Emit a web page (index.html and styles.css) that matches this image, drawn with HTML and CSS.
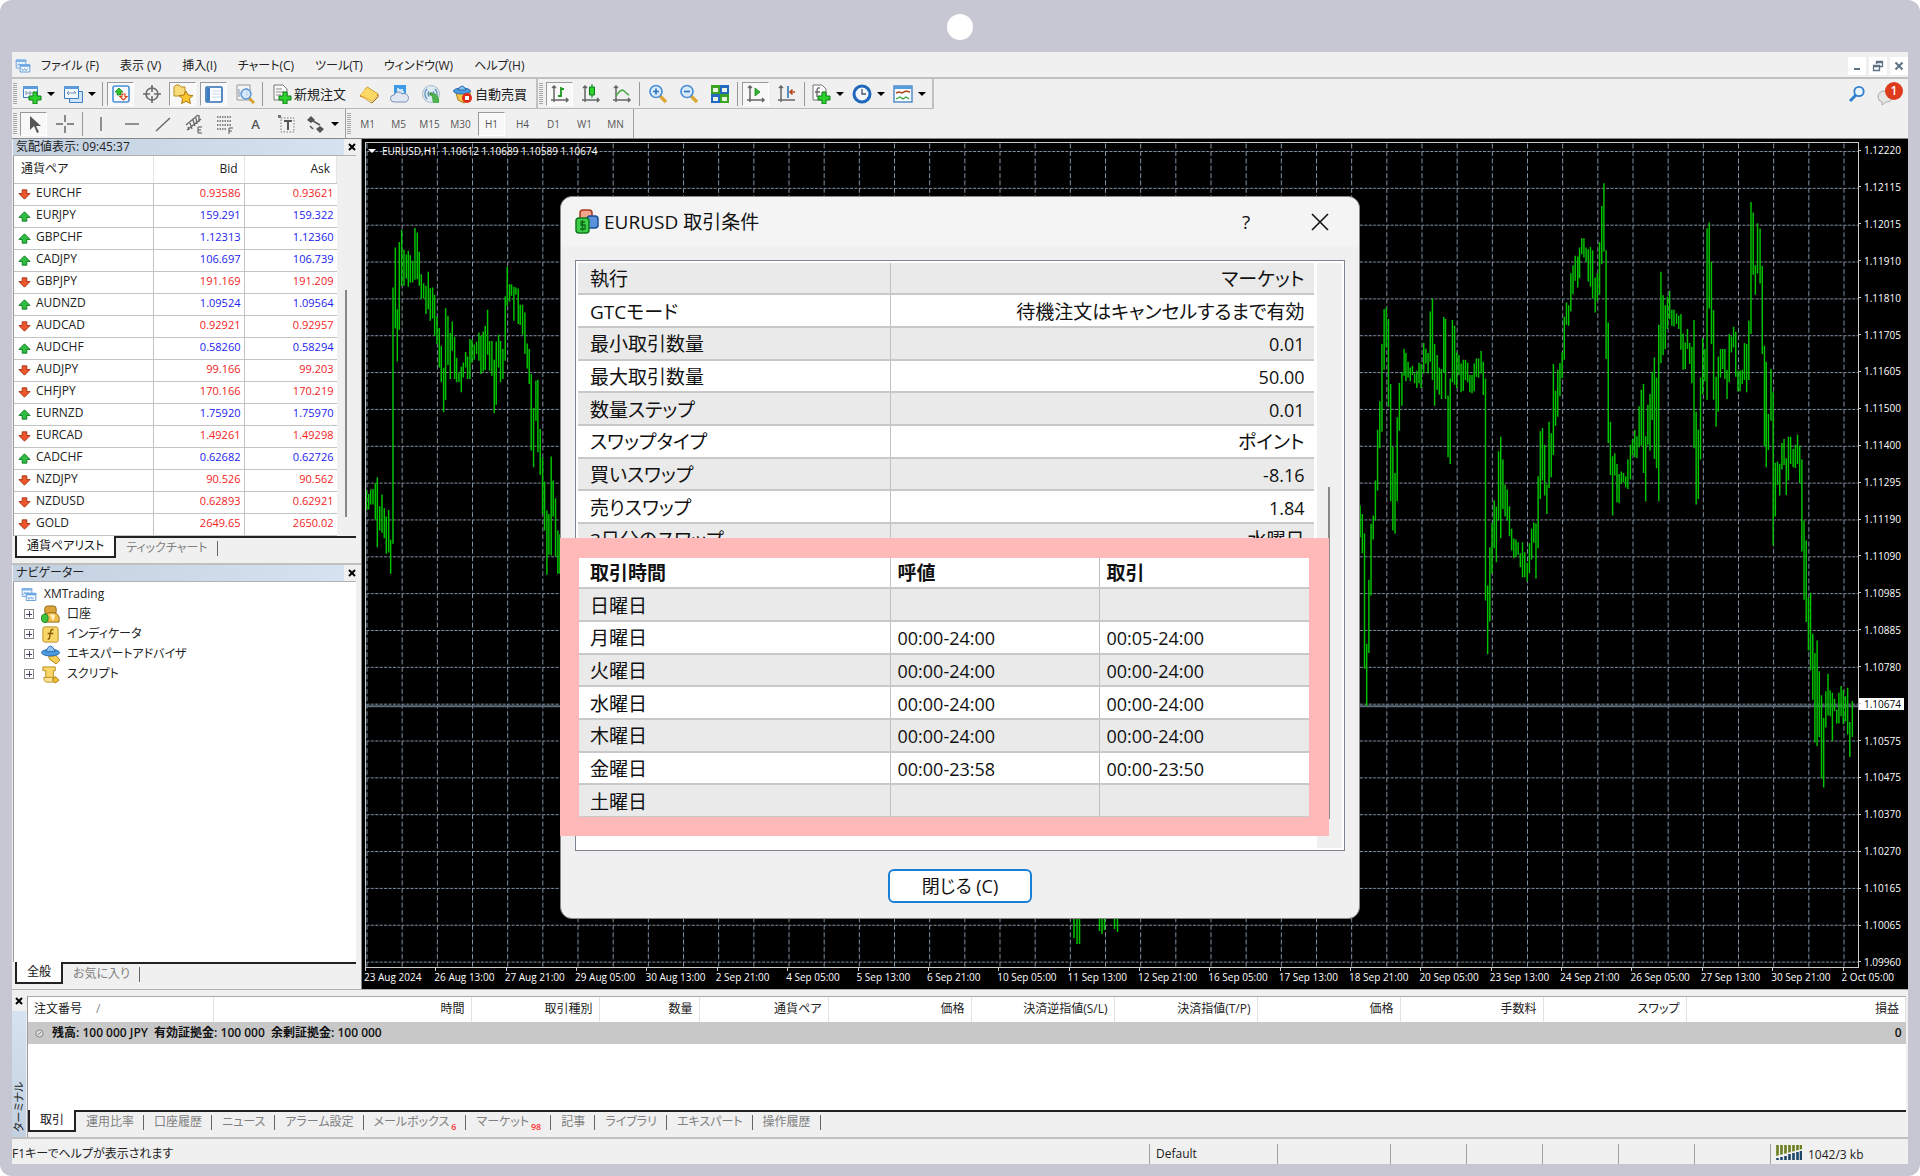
FILE: index.html
```html
<!DOCTYPE html>
<html lang="ja">
<head>
<meta charset="utf-8">
<title>XMTrading - EURUSD,H1</title>
<link rel="stylesheet" href="styles.css">
</head>
<body>
<svg class="defs" aria-hidden="true">
  <symbol id="i-app" viewBox="0 0 20 20"><path d="M1.500 2.500h12v10h-12z" fill="#eef6fd" stroke="#5b95d6"/><path d="M1 2h13v3H1z" fill="#7db4e8"/><path d="M3 10l2-3 2 3 2-3" fill="none" stroke="#5b95d6"/><path d="M6.500 8.500h12v9h-12z" fill="#f6fbff" stroke="#4c8bd0"/><path d="M6 8h13v3H6z" fill="#6aa6e4"/><path d="M8 13l2 3 2-3 2 3 2-3" fill="none" stroke="#5b95d6"/></symbol>
  <symbol id="i-newchart" viewBox="0 0 20 20"><path d="M1.500 2.500h14v11h-14z" fill="#f2f8fe" stroke="#3c7fc4"/><path d="M1 2h15v3H1z" fill="#5a9bdc"/><path d="M4 7v4M4 9h6M8 7v4" stroke="#7a93ad" fill="none"/><path d="M11 8h4v4h4v4h-4v4h-4v-4H7v-4h4z" fill="#2fd12f" stroke="#0b7d14"/></symbol>
  <symbol id="i-profiles" viewBox="0 0 20 20"><path d="M6.500 7.500h13v11h-13z" fill="#cfe4f8" stroke="#3c7fc4"/><path d="M1.500 2.500h14v12h-14z" fill="#f2f8fe" stroke="#3c7fc4"/><path d="M1 2h15v3H1z" fill="#5a9bdc"/><path d="M4 9h9M4 9l2-2M4 9l2 2M13 9l-2-2" stroke="#7a93ad" fill="none"/></symbol>
  <symbol id="i-market" viewBox="0 0 20 20"><rect x="2" y="2" width="16" height="16" rx="2" fill="#f7fbff" stroke="#4a90d9" stroke-width="1.600"/><path d="M8 4l4 4h-2v3H6V8H4z" fill="#2fc32f" stroke="#0b7d14" stroke-width=".7"/><path d="M12.500 16l-3.500-3.500h2V10h3v2.500h2z" fill="#fff" stroke="#e0461c" stroke-width="1.200"/></symbol>
  <symbol id="i-target" viewBox="0 0 20 20"><circle cx="10" cy="10" r="6" fill="none" stroke="#6b6b6b" stroke-width="1.600"/><path d="M10 1v7M10 12v7M1 10h7M12 10h7" stroke="#6b6b6b" stroke-width="1.600"/></symbol>
  <symbol id="i-nav" viewBox="0 0 20 20"><path d="M1 12V3l2-2h3l2 2h4v9z" fill="#f8dc78" stroke="#b98d1c"/><path d="M13 7l2 4 5 .6-3.600 3.200 1 4.700L13 17.300 8.600 19.500l1-4.700L6 11.600l5-.6z" fill="#fbc62d" stroke="#b07a10"/></symbol>
  <symbol id="i-terminal" viewBox="0 0 20 20"><rect x="2" y="3" width="16" height="15" rx="1" fill="#fbfdff" stroke="#2e6db4" stroke-width="1.600"/><path d="M3 4h3v13H3z" fill="#3f7cc2"/><path d="M8 7h9M8 10h9M8 13h9" stroke="#c9ddf2"/></symbol>
  <symbol id="i-tester" viewBox="0 0 20 20"><path d="M2 1h13v15H2z" fill="#f4f4f4" stroke="#999"/><path d="M4 13V5M7 13V8M12 12V4" stroke="#7a93ad"/><path d="M14 14l5 5" stroke="#d8a030" stroke-width="3"/><circle cx="11" cy="10" r="5" fill="#cfe6fb" fill-opacity=".8" stroke="#5b95d6" stroke-width="1.400"/></symbol>
  <symbol id="i-order" viewBox="0 0 20 20"><path d="M2 1h9l4 4v11H2z" fill="#fafafa" stroke="#777"/><path d="M4 5h6M4 8h8M4 11h5" stroke="#888"/><path d="M11 8h4v4h4v4h-4v4h-4v-4H7v-4h4z" fill="#2fd12f" stroke="#0b7d14"/></symbol>
  <symbol id="i-book" viewBox="0 0 20 20"><path d="M1 12L8 3l11 7v3l-6 6z" fill="#dfa12a" stroke="#9c6a10"/><path d="M1 11l7-8 11 7-6 7z" fill="#fbd765"/><path d="M1.500 13l11 5 6-6" fill="none" stroke="#fff3c8"/></symbol>
  <symbol id="i-cloud" viewBox="0 0 20 20"><path d="M4 1h12v12H4z" fill="#3b9be8"/><path d="M8 4v4h6M8 6h5" stroke="#fff" fill="none" stroke-width="1.300"/><path d="M4 18a3.500 3.500 0 010-7 4.500 4.500 0 018-1 4 4 0 014 8z" fill="#dfe7f2" stroke="#7d93b3"/></symbol>
  <symbol id="i-signal" viewBox="0 0 20 20"><circle cx="10" cy="10" r="8.500" fill="#dfeaf3" stroke="#a9bccb"/><path d="M6 15a7 7 0 010-10M14 5a7 7 0 010 10M8 12.500a4 4 0 010-5M12 7.500a4 4 0 010 5" fill="none" stroke="#5b8fb8" stroke-width="1.300"/><path d="M10 9l2 10h6a9 9 0 00-3-9z" fill="#4fb04f"/><circle cx="10" cy="10" r="1.800" fill="#3b9a3b"/></symbol>
  <symbol id="i-auto" viewBox="0 0 20 20"><path d="M3 9l2 7 6 3 6-4V8z" fill="#f3c548" stroke="#a8801c"/><ellipse cx="9" cy="7" rx="8.500" ry="3" fill="#4c9be0" stroke="#2b6cae"/><path d="M5 6q4-8 8 0z" fill="#8cc4f3" stroke="#2b6cae"/><circle cx="14" cy="14" r="5" fill="#e02b18"/><path d="M12 12h4v4h-4z" fill="#fff"/></symbol>
  <symbol id="i-bars" viewBox="0 0 20 20"><path d="M4 2v16M1 16h17M2 4l2-2 2 2M16 14l2 2-2 2" fill="none" stroke="#666" stroke-width="1.500"/><path d="M11 3v10M11 5h3M8 12h3" stroke="#1b9a1b" stroke-width="1.800"/></symbol>
  <symbol id="i-candle" viewBox="0 0 20 20"><path d="M4 2v16M1 16h17M2 4l2-2 2 2M16 14l2 2-2 2" fill="none" stroke="#666" stroke-width="1.500"/><path d="M11 0v14" stroke="#0b7d14"/><path d="M8.500 3h5v8h-5z" fill="#2fd12f" stroke="#0b7d14"/></symbol>
  <symbol id="i-line" viewBox="0 0 20 20"><path d="M4 2v16M1 16h17M2 4l2-2 2 2M16 14l2 2-2 2" fill="none" stroke="#666" stroke-width="1.500"/><path d="M4 12q5-8 8-5t5 4" fill="none" stroke="#4cab4c" stroke-width="1.600"/></symbol>
  <symbol id="i-zin" viewBox="0 0 20 20"><path d="M12 12l6 6" stroke="#dca632" stroke-width="3.400"/><circle cx="8" cy="7.500" r="6" fill="#d8ebfb" stroke="#4a8fd3" stroke-width="1.700"/><path d="M5 7.500h6M8 4.500v6" stroke="#2f75bb" stroke-width="1.700"/></symbol>
  <symbol id="i-zout" viewBox="0 0 20 20"><path d="M12 12l6 6" stroke="#dca632" stroke-width="3.400"/><circle cx="8" cy="7.500" r="6" fill="#d8ebfb" stroke="#4a8fd3" stroke-width="1.700"/><path d="M5 7.500h6" stroke="#2f75bb" stroke-width="1.700"/></symbol>
  <symbol id="i-tile" viewBox="0 0 20 20"><path d="M1 1h9v9H1zM10 10h9v9h-9z" fill="#3aa321"/><path d="M10 1h9v9h-9zM1 10h9v9H1z" fill="#2469c0"/><path d="M3 4h5v4H3zM12 4h5v4h-5zM3 13h5v4H3zM12 13h5v4h-5z" fill="#e9f3e6"/></symbol>
  <symbol id="i-scroll" viewBox="0 0 20 20"><path d="M4 2v16M1 16h17M2 4l2-2 2 2M16 14l2 2-2 2" fill="none" stroke="#666" stroke-width="1.500"/><path d="M9 4l5 4-5 4z" fill="#2fb52f" stroke="#0b7d14" stroke-width=".7"/></symbol>
  <symbol id="i-shift" viewBox="0 0 20 20"><path d="M4 2v16M1 16h17M2 4l2-2 2 2" fill="none" stroke="#666" stroke-width="1.500"/><path d="M11 2v12" stroke="#2f75bb" stroke-width="1.600"/><path d="M18 8h-5M15.500 5.500L13 8l2.500 2.500" fill="none" stroke="#b5451b" stroke-width="1.600"/></symbol>
  <symbol id="i-indic" viewBox="0 0 20 20"><path d="M2 1h9l4 4v11H2z" fill="#fafafa" stroke="#777"/><path d="M9 4q-3-1-3 3v6M4 8h5" fill="none" stroke="#666" stroke-width="1.300"/><path d="M11 8h4v4h4v4h-4v4h-4v-4H7v-4h4z" fill="#2fd12f" stroke="#0b7d14"/></symbol>
  <symbol id="i-clock" viewBox="0 0 20 20"><circle cx="10" cy="10" r="8" fill="#f3f7fc" stroke="#1f66bd" stroke-width="3"/><path d="M10 5v5h4" fill="none" stroke="#456" stroke-width="1.300"/></symbol>
  <symbol id="i-templ" viewBox="0 0 20 20"><rect x="1" y="2" width="18" height="16" fill="#f8fbff" stroke="#3c7fc4" stroke-width="1.300"/><path d="M1 2h18v3H1z" fill="#5a9bdc"/><path d="M3 9l3-1 3 1 4-2 4 1" fill="none" stroke="#b5451b" stroke-width="1.400"/><path d="M3 15l4-2 3 2 3-2 3 2" fill="none" stroke="#3aa33a" stroke-width="1.300"/></symbol>
  <symbol id="i-cursor" viewBox="0 0 20 20"><path d="M6 2v14l4-4 3 7 2-1-3-6h5z" fill="#555"/></symbol>
  <symbol id="i-cross" viewBox="0 0 20 20"><path d="M10 1v7M10 12v7M1 10h7M12 10h7" stroke="#666" stroke-width="1.500"/></symbol>
  <symbol id="i-v" viewBox="0 0 20 20"><path d="M10 3v14" stroke="#666" stroke-width="1.400"/></symbol>
  <symbol id="i-h" viewBox="0 0 20 20"><path d="M3 10h14" stroke="#666" stroke-width="1.400"/></symbol>
  <symbol id="i-trend" viewBox="0 0 20 20"><path d="M3 17L17 4" stroke="#666" stroke-width="1.400"/></symbol>
  <symbol id="i-chan" viewBox="0 0 20 20"><path d="M2 11L14 1M3 16L17 5M4 13l1 3M6 9l2 6M9 6l2 6M12 4l1 6M15 1v7" fill="none" stroke="#666" stroke-width="1.300"/><path d="M18 13h-4v6h4M14 16h3" fill="none" stroke="#555"/></symbol>
  <symbol id="i-fib" viewBox="0 0 20 20"><path d="M2 3h15M2 7h15M2 11h15M2 15h10" stroke="#666" stroke-dasharray="1.500 1" stroke-width="1.300"/><path d="M18 14h-4v6M14 17h3" fill="none" stroke="#555"/></symbol>
  <symbol id="i-label" viewBox="0 0 20 20"><path d="M4 4h13v14H4z" fill="none" stroke="#777" stroke-dasharray="1.500 1.500"/><path d="M7 7h8M11 7v9" stroke="#555" stroke-width="2" fill="none"/><path d="M1 1h3v3H1z" fill="#777"/></symbol>
  <symbol id="i-shapes" viewBox="0 0 20 20"><path d="M5 2l4 4-4 3-4-3zM14 12l4 3-4 4-4-4z" fill="#555"/><path d="M4 12l3 3M7 7l7 4" stroke="#555" stroke-width="1.500" fill="none"/></symbol>
  <symbol id="i-up" viewBox="0 0 14 14"><path d="M7 2l6 6H9.500v4h-5V8H1z" fill="#2fbe42" stroke="#0f7a22"/></symbol>
  <symbol id="i-down" viewBox="0 0 14 14"><path d="M7 12L1 6h3.500V2h5v4H13z" fill="#f0562c" stroke="#a23212"/></symbol>
  <symbol id="i-acct" viewBox="0 0 20 20"><rect x="4" y="1" width="12" height="9" rx="3" fill="#d9a43a" stroke="#8f6512"/><path d="M4 18V13q0-5 7-5t8 5v5z" fill="#f0bf4a" stroke="#8f6512"/><path d="M9 10l4 7 2-7" fill="#fff2c4"/><ellipse cx="4" cy="14" rx="3.500" ry="4.500" fill="#3fc43f" stroke="#1c7d1c"/></symbol>
  <symbol id="i-fx" viewBox="0 0 20 20"><rect x="2" y="2" width="16" height="16" rx="2" fill="#f9d768" stroke="#b98d1c"/><path d="M13 5q-3-1-3 3l-1 5q0 2-2 2M7 9h6" fill="none" stroke="#8a5c08" stroke-width="1.500"/></symbol>
  <symbol id="i-expert" viewBox="0 0 20 20"><path d="M8 12l8-1 4 5-4 4-7-5z" fill="#f7cd52" stroke="#a8801c"/><ellipse cx="10" cy="8" rx="9.500" ry="3.500" fill="#4c9be0" stroke="#2b6cae"/><path d="M5 7q5-12 10 0z" fill="#8cc4f3" stroke="#2b6cae"/></symbol>
  <symbol id="i-script" viewBox="0 0 20 20"><path d="M2 2h13v4h-2v8H5V6H2z" fill="#f9d768" stroke="#b98d1c"/><path d="M3 13h9l2 5H6q-3 0-3-5z" fill="#fbe393" stroke="#b98d1c"/><path d="M15 12l4 4-4 3-3-3z" fill="#f3bb2e" stroke="#a8801c"/></symbol>
</svg>

<div class="frame">
  <header class="bezel"><span class="camera"></span></header>

  <main class="app">
    <nav class="menubar">
      <svg class="ico"><use href="#i-app"/></svg>
      <button>ファイル (F)</button><button>表示 (V)</button><button>挿入(I)</button><button>チャート(C)</button><button>ツール(T)</button><button>ウィンドウ(W)</button><button>ヘルプ(H)</button>
      <div class="winbtns">
        <button aria-label="最小化"><svg viewBox="0 0 16 16"><path d="M5 11h6" stroke="#5d7385" stroke-width="2"/></svg></button>
        <button aria-label="元に戻す"><svg viewBox="0 0 16 16"><path d="M6.500 6V3.500h6v5H10M6.500 4.500h6M3.500 7.500h6v5h-6zM3.500 8.500h6" fill="none" stroke="#5d7385" stroke-width="1.300"/></svg></button>
        <button aria-label="閉じる"><svg viewBox="0 0 16 16"><path d="M4.500 4.500l7 7M11.500 4.500l-7 7" stroke="#5d7385" stroke-width="2"/></svg></button>
      </div>
    </nav>

    <div class="toolbar toolbar-main">
      <div class="tools">
        <i class="grip"></i>
        <button class="tool drop"><svg class="ico"><use href="#i-newchart"/></svg></button>
        <button class="tool drop"><svg class="ico"><use href="#i-profiles"/></svg></button>
        <i class="sep"></i>
        <button class="tool on"><svg class="ico"><use href="#i-market"/></svg></button>
        <button class="tool"><svg class="ico"><use href="#i-target"/></svg></button>
        <button class="tool on"><svg class="ico"><use href="#i-nav"/></svg></button>
        <button class="tool on"><svg class="ico"><use href="#i-terminal"/></svg></button>
        <button class="tool"><svg class="ico"><use href="#i-tester"/></svg></button>
        <i class="sep"></i>
        <button class="tool wide"><svg class="ico"><use href="#i-order"/></svg>新規注文</button>
        <button class="tool"><svg class="ico"><use href="#i-book"/></svg></button>
        <button class="tool"><svg class="ico"><use href="#i-cloud"/></svg></button>
        <button class="tool"><svg class="ico"><use href="#i-signal"/></svg></button>
        <button class="tool wide"><svg class="ico"><use href="#i-auto"/></svg>自動売買</button>
      </div>
      <div class="tools">
        <i class="grip"></i>
        <button class="tool on"><svg class="ico"><use href="#i-bars"/></svg></button>
        <button class="tool"><svg class="ico"><use href="#i-candle"/></svg></button>
        <button class="tool"><svg class="ico"><use href="#i-line"/></svg></button>
        <i class="sep"></i>
        <button class="tool"><svg class="ico"><use href="#i-zin"/></svg></button>
        <button class="tool"><svg class="ico"><use href="#i-zout"/></svg></button>
        <button class="tool"><svg class="ico"><use href="#i-tile"/></svg></button>
        <i class="sep"></i>
        <button class="tool on"><svg class="ico"><use href="#i-scroll"/></svg></button>
        <button class="tool"><svg class="ico"><use href="#i-shift"/></svg></button>
        <i class="sep"></i>
        <button class="tool drop"><svg class="ico"><use href="#i-indic"/></svg></button>
        <button class="tool drop"><svg class="ico"><use href="#i-clock"/></svg></button>
        <button class="tool drop"><svg class="ico"><use href="#i-templ"/></svg></button>
      </div>
      <div class="corner">
        <button aria-label="検索"><svg width="18" height="18" viewBox="0 0 18 18"><path d="M8 10l-6 6" stroke="#2f7fd0" stroke-width="3"/><circle cx="11" cy="6.500" r="4.700" fill="#eaf4fd" stroke="#2f7fd0" stroke-width="1.800"/></svg></button>
        <button class="notify" aria-label="通知"><svg width="28" height="24" viewBox="0 0 28 24"><path d="M3 15q0-6 7-6t8 6q-1 5-7 5l-4 3v-3q-4-1-4-5z" fill="#e6e6e6" stroke="#aaa"/></svg><b>1</b></button>
      </div>
    </div>

    <div class="toolbar toolbar-sub">
      <div class="tools">
        <i class="grip"></i>
        <button class="tool on"><svg class="ico"><use href="#i-cursor"/></svg></button>
        <button class="tool"><svg class="ico"><use href="#i-cross"/></svg></button>
        <i class="sep"></i>
        <button class="tool"><svg class="ico"><use href="#i-v"/></svg></button>
        <button class="tool"><svg class="ico"><use href="#i-h"/></svg></button>
        <button class="tool"><svg class="ico"><use href="#i-trend"/></svg></button>
        <button class="tool"><svg class="ico"><use href="#i-chan"/></svg></button>
        <button class="tool"><svg class="ico"><use href="#i-fib"/></svg></button>
        <button class="tool letter">A</button>
        <button class="tool"><svg class="ico"><use href="#i-label"/></svg></button>
        <button class="tool drop"><svg class="ico"><use href="#i-shapes"/></svg></button>
      </div>
      <div class="tools periods">
        <i class="grip"></i>
        <button class="tool">M1</button><button class="tool">M5</button><button class="tool">M15</button><button class="tool">M30</button><button class="tool on">H1</button><button class="tool">H4</button><button class="tool">D1</button><button class="tool">W1</button><button class="tool">MN</button>
      </div>
    </div>

    <div class="workspace">
      <aside class="side">
        <section class="panel watch">
          <header class="title"><h2>気配値表示: 09:45:37</h2><button aria-label="閉じる"><svg viewBox="0 0 8 8"><path d="M1 1l6 6M7 1L1 7"/></svg></button></header>
          <div class="scroller">
            <table class="quotes">
              <thead><tr><th>通貨ペア</th><th>Bid</th><th>Ask</th></tr></thead>
              <tbody>
                <tr class="down"><td><svg><use href="#i-down"/></svg>EURCHF</td><td>0.93586</td><td>0.93621</td></tr>
                <tr class="up"><td><svg><use href="#i-up"/></svg>EURJPY</td><td>159.291</td><td>159.322</td></tr>
                <tr class="up"><td><svg><use href="#i-up"/></svg>GBPCHF</td><td>1.12313</td><td>1.12360</td></tr>
                <tr class="up"><td><svg><use href="#i-up"/></svg>CADJPY</td><td>106.697</td><td>106.739</td></tr>
                <tr class="down"><td><svg><use href="#i-down"/></svg>GBPJPY</td><td>191.169</td><td>191.209</td></tr>
                <tr class="up"><td><svg><use href="#i-up"/></svg>AUDNZD</td><td>1.09524</td><td>1.09564</td></tr>
                <tr class="down"><td><svg><use href="#i-down"/></svg>AUDCAD</td><td>0.92921</td><td>0.92957</td></tr>
                <tr class="up"><td><svg><use href="#i-up"/></svg>AUDCHF</td><td>0.58260</td><td>0.58294</td></tr>
                <tr class="down"><td><svg><use href="#i-down"/></svg>AUDJPY</td><td>99.166</td><td>99.203</td></tr>
                <tr class="down"><td><svg><use href="#i-down"/></svg>CHFJPY</td><td>170.166</td><td>170.219</td></tr>
                <tr class="up"><td><svg><use href="#i-up"/></svg>EURNZD</td><td>1.75920</td><td>1.75970</td></tr>
                <tr class="down"><td><svg><use href="#i-down"/></svg>EURCAD</td><td>1.49261</td><td>1.49298</td></tr>
                <tr class="up"><td><svg><use href="#i-up"/></svg>CADCHF</td><td>0.62682</td><td>0.62726</td></tr>
                <tr class="down"><td><svg><use href="#i-down"/></svg>NZDJPY</td><td>90.526</td><td>90.562</td></tr>
                <tr class="down"><td><svg><use href="#i-down"/></svg>NZDUSD</td><td>0.62893</td><td>0.62921</td></tr>
                <tr class="down"><td><svg><use href="#i-down"/></svg>GOLD</td><td>2649.65</td><td>2650.02</td></tr>
              </tbody>
            </table>
            <div class="track"><i class="thumb"></i></div>
          </div>
          <div class="tabs"><button class="active">通貨ペアリスト</button><button>ティックチャート</button></div>
        </section>
        <section class="panel navigator">
          <header class="title"><h2>ナビゲーター</h2><button aria-label="閉じる"><svg viewBox="0 0 8 8"><path d="M1 1l6 6M7 1L1 7"/></svg></button></header>
          <div class="tree">
            <p><svg class="ico"><use href="#i-app"/></svg>XMTrading</p>
            <ul>
              <li><i class="plus"></i><svg class="ico"><use href="#i-acct"/></svg>口座</li>
              <li><i class="plus"></i><svg class="ico"><use href="#i-fx"/></svg>インディケータ</li>
              <li><i class="plus"></i><svg class="ico"><use href="#i-expert"/></svg>エキスパートアドバイザ</li>
              <li><i class="plus"></i><svg class="ico"><use href="#i-script"/></svg>スクリプト</li>
            </ul>
          </div>
          <div class="tabs"><button class="active">全般</button><button>お気に入り</button></div>
        </section>
      </aside>

      <section class="chart">
        <div class="plot">
          <svg viewBox="365 142 1493 825" preserveAspectRatio="none">
            <defs>
              <pattern id="grid" x="365.500" y="150" width="35.190" height="36.890" patternUnits="userSpaceOnUse">
                <path d="M0 .5H35.190" stroke="#8495a8" stroke-dasharray="3 1.400"/>
                <path d="M.5 0V36.890" stroke="#8495a8" stroke-dasharray="5 2.380"/>
              </pattern>
            </defs>
            <rect x="365" y="142" width="1493" height="825" fill="url(#grid)"/>
            <path d="M365 706H1858" stroke="#5b6b7b" stroke-width="2"/>
            <g fill="none" stroke="#00c400">
              <path transform="translate(350 130) scale(.33333)" stroke-width="4.400" d="M46 1077V1140M53 1090V1137M59 1077V1122M66 1075V1122M73 1058V1168M79 1040V1250M86 1127V1200M93 1092V1207M100 1133V1223M106 1158V1270M113 1138V1266M119 1228V1330M126 470V1240M133 350V593M139 535V692M145 333V597M152 297V465M159 357V465M166 371V443M172 360V468M178 373V455M185 390V455M192 291V447M199 305V445M205 363V465M211 430V503M218 457V503M225 465V550M232 423V535M238 472V570M245 470V563M251 492V615M258 557V640M265 592V710M271 645V755M278 711V845M284 532V808M291 555V703M298 607V745M304 572V660M311 618V745M317 681V755M324 725V755M331 708V785M337 695V740M344 664V710M350 677V745M357 625V745M363 628V695M370 641V687M377 633V670M384 605V690M390 615V730M397 602V722M403 585V718M410 537V672M416 631V720M423 631V735M430 687V848M436 632V822M443 612V710M449 631V755M456 655V745M463 497V690M469 408V525M476 460V512M482 460V495M489 468V570M495 470V492M502 473V580M508 522V583M515 522V612M522 545V670M529 638V713M535 655V760M541 730V960M548 832V1010M555 750V870M561 747V965M568 895V1033M575 980V1150M581 1053V1200M588 1140V1333M594 1150V1273M601 978V1275M607 1050V1158M614 1103V1278M621 1200V1330M627 1212V1330"/>
              <path transform="translate(1350 40) scale(.36350 .33333)" stroke-width="4" d="M27 1395V1490M33 1420V1538M39 1478V1885M45 1810V1997M51 1618V1838M57 1450V1665M63 1425V1497M69 1320V1440M75 1167V1350M81 1082V1223M87 910V1173M93 805V987M99 800V920M105 835V1098M111 1030V1382M117 1218V1470M123 1297V1480M129 1130V1382M135 1027V1170M142 995V1095M148 924V1005M153 937V1022M159 963V1010M165 980V1022M171 975V1003M177 998V1028M183 990V1042M189 966V1028M195 970V1042M202 907V998M208 924V968M214 937V998M220 812V963M226 773V1018M232 910V1095M239 943V1047M245 980V1062M251 985V1075M257 828V995M262 835V1075M269 1065V1250M275 1013V1270M281 838V1025M287 855V1032M293 935V1042M299 943V1003M305 968V1055M311 957V1050M317 957V1018M323 966V1025M329 1003V1055M335 1003V1058M341 968V1052M347 953V1008M353 953V1010M360 931V998M366 963V1063M372 1013V1680M378 1635V1842M384 1520V1743M390 1448V1598M396 1380V1523M402 1398V1565M408 1232V1440M414 1188V1493M420 1257V1405M426 1332V1428M432 1347V1440M438 1397V1487M444 1465V1530M450 1494V1553M456 1497V1550M462 1505V1543M468 1538V1580M474 1505V1610M480 1535V1610M487 1567V1622M493 1508V1598M499 1465V1557M505 1446V1507M511 1449V1614M517 1307V1523M523 1172V1375M529 1162V1320M535 1212V1365M541 1332V1420M547 1143V1342M553 1178V1310M559 970V1243M565 1050V1155M571 987V1128M577 967V1067M583 935V1012M589 828V957M595 785V852M601 793V855M607 697V812M613 673V760M619 645V720M626 647V740M631 620V712M637 592V640M643 592V650M649 620V663M655 625V722M661 618V737M667 628V773M674 710V815M680 697V780M686 603V762M692 495V670M698 427V632M704 628V955M710 845V1207M716 1143V1303M722 1247V1425M728 1238V1305M734 1270V1385M740 1300V1388M746 1293V1330M752 1297V1325M758 1307V1340M764 1257V1345M771 1212V1317M777 1195V1243M783 1168V1250M789 1187V1252M795 1097V1220M801 1047V1215M807 1030V1297M813 1187V1382M819 1092V1212M825 1060V1230M831 993V1138M837 950V1255M843 1010V1283M849 852V1382M855 693V967M861 763V943M867 793V925M873 768V865M879 750V835M885 807V855M891 807V857M898 818V850M904 825V865M910 820V927M916 878V987M922 905V985M928 865V925M934 907V970M940 918V1028M946 838V1223M952 1113V1392M958 1167V1375M964 1010V1257M970 892V1060M976 925V1022M982 562V1077M988 545V803M994 663V910M1000 808V1077M1007 1008V1158M1013 947V1113M1019 925V1010M1025 925V985M1031 925V1015M1037 988V1075M1043 880V1025M1049 887V935M1055 858V920M1061 873V1008M1067 990V1052M1073 990V1052M1079 987V1030M1085 907V1018M1091 910V1055M1097 840V1018M1103 483V880M1109 515V702M1115 673V762M1121 547V698M1128 563V728M1134 675V940M1140 915V1217M1145 963V1280M1151 1120V1228M1158 985V1140M1164 1053V1515M1170 1267V1428M1176 1263V1333M1182 1270V1365M1188 1207V1287M1194 1195V1273M1200 1253V1363M1206 1188V1320M1212 1188V1270M1219 1225V1280M1225 1212V1282M1231 1182V1270M1237 1215V1327M1243 1257V1533M1249 1440V1678M1255 1500V1745M1261 1672V1830M1267 1657V1890M1273 1780V1978M1279 1838V2107M1285 1800V2117M1291 1893V2090M1297 1965V2215M1303 2033V2242M1309 1953V2062M1315 1900V2025M1321 1950V2028M1327 1957V2102M1333 1975V2012M1339 2008V2050M1345 1957V2050M1351 1937V2028M1357 1948V2052M1363 1968V2043M1369 1942V2083M1375 2045V2150M1382 1982V2090"/>
              <path stroke-width="1.500" d="M1073.500 910V938M1076.500 910V944M1079 910V944M1099 910V931M1101.500 910V934M1104 910V930M1114 910V929M1117 910V932"/>
            </g>
          </svg>
          <p class="caption"><i></i>EURUSD,H1&nbsp; 1.10612 1.10689 1.10589 1.10674</p>
        </div>
        <ol class="prices">
          <li>1.12220</li><li>1.12115</li><li>1.12015</li><li>1.11910</li><li>1.11810</li><li>1.11705</li><li>1.11605</li><li>1.11500</li><li>1.11400</li><li>1.11295</li><li>1.11190</li><li>1.11090</li><li>1.10985</li><li>1.10885</li><li>1.10780</li><li class="now">1.10674</li><li>1.10575</li><li>1.10475</li><li>1.10370</li><li>1.10270</li><li>1.10165</li><li>1.10065</li><li>1.09960</li>
        </ol>
        <ol class="times">
          <li>23 Aug 2024</li><li>26 Aug 13:00</li><li>27 Aug 21:00</li><li>29 Aug 05:00</li><li>30 Aug 13:00</li><li>2 Sep 21:00</li><li>4 Sep 05:00</li><li>5 Sep 13:00</li><li>6 Sep 21:00</li><li>10 Sep 05:00</li><li>11 Sep 13:00</li><li>12 Sep 21:00</li><li>16 Sep 05:00</li><li>17 Sep 13:00</li><li>18 Sep 21:00</li><li>20 Sep 05:00</li><li>23 Sep 13:00</li><li>24 Sep 21:00</li><li>26 Sep 05:00</li><li>27 Sep 13:00</li><li>30 Sep 21:00</li><li>2 Oct 05:00</li>
        </ol>
      </section>
    </div>

    <section class="terminal">
      <div class="rail"><button aria-label="閉じる"><svg viewBox="0 0 8 8"><path d="M1 1l6 6M7 1L1 7"/></svg></button><h2>ターミナル</h2></div>
      <div class="orders">
        <table>
          <colgroup><col class="c1"><col class="c2"><col class="c3"><col class="c4"><col class="c5"><col class="c6"><col class="c6"><col class="c6"><col class="c6"><col class="c6"><col class="c6"><col></colgroup>
          <thead><tr><th>注文番号<span class="sort">/</span></th><th>時間</th><th>取引種別</th><th>数量</th><th>通貨ペア</th><th>価格</th><th>決済逆指値(S/L)</th><th>決済指値(T/P)</th><th>価格</th><th>手数料</th><th>スワップ</th><th>損益</th></tr></thead>
          <tbody><tr><td colspan="11"><svg width="9" height="9" viewBox="0 0 9 9"><circle cx="4.500" cy="4.500" r="3.700" fill="#d8d8d8" stroke="#888"/><path d="M3 6l3-3" stroke="#888"/></svg>残高: 100 000 JPY&nbsp; 有効証拠金: 100 000&nbsp; 余剰証拠金: 100 000</td><td>0</td></tr></tbody>
        </table>
        <div class="tabs"><button class="active">取引</button><button>運用比率</button><button>口座履歴</button><button>ニュース</button><button>アラーム設定</button><button>メールボックス<sub>6</sub></button><button>マーケット<sub>98</sub></button><button>記事</button><button>ライブラリ</button><button>エキスパート</button><button>操作履歴</button></div>
      </div>
    </section>

    <footer class="status">
      <span class="hint">F1キーでヘルプが表示されます</span><span class="s1">Default</span><span class="s2"></span><span class="s3"></span><span class="s3"></span><span class="s3"></span><span class="s3"></span><span class="s3"></span>
      <span class="net"><svg width="26" height="15" viewBox="0 0 26 15"><path d="M1.500 0v15M5.500 0v15M9.500 0v15M13.500 0v15M17.500 0v15M21.500 0v15M25 0v15" stroke="#6b7f1e" stroke-width="2.600"/><path d="M0 15V11L26 4V15z" fill="#f0f0f0"/><path d="M1.500 13v2M5.500 12v3M9.500 11v4M13.500 9v6M17.500 8v7M21.500 7v8M25 6v9" stroke="#1d4667" stroke-width="2.600"/></svg>1042/3 kb</span>
    </footer>
  </main>

  <section class="dialog" role="dialog" aria-labelledby="dlg-title">
    <header>
      <svg width="24" height="26" viewBox="0 0 24 26"><rect x="5" y="1" width="12" height="11" rx="3" fill="#f2a48f" stroke="#a8381c" stroke-width="1.500"/><rect x="12" y="7" width="11" height="12" rx="3" fill="#5a90dc" stroke="#1d4b94" stroke-width="1.500"/><rect x="1" y="9" width="13" height="15" rx="3" fill="#3fce4a" stroke="#127a1c" stroke-width="1.500"/><path d="M10 13H6v3h4v4H5M7.500 11v11" fill="none" stroke="#0e6a18" stroke-width="1.300"/></svg>
      <h1 id="dlg-title">EURUSD 取引条件</h1>
      <button class="help">?</button>
      <button class="close" aria-label="閉じる"><svg width="18" height="18" viewBox="0 0 18 18"><path d="M1 1l16 16M17 1L1 17" stroke="#111" stroke-width="1.600"/></svg></button>
    </header>
    <div class="list">
      <table>
        <colgroup><col class="k"><col class="q"><col class="t"></colgroup>
        <tbody>
          <tr><td>執行</td><td colspan="2">マーケット</td></tr>
          <tr><td>GTCモード</td><td colspan="2">待機注文はキャンセルするまで有効</td></tr>
          <tr><td>最小取引数量</td><td colspan="2" class="n">0.01</td></tr>
          <tr><td>最大取引数量</td><td colspan="2" class="n">50.00</td></tr>
          <tr><td>数量ステップ</td><td colspan="2" class="n">0.01</td></tr>
          <tr><td>スワップタイプ</td><td colspan="2">ポイント</td></tr>
          <tr><td>買いスワップ</td><td colspan="2" class="n">-8.16</td></tr>
          <tr><td>売りスワップ</td><td colspan="2" class="n">1.84</td></tr>
          <tr><td>3日分のスワップ</td><td colspan="2">水曜日</td></tr>
          <tr><th>取引時間</th><th>呼値</th><th>取引</th></tr>
          <tr><td>日曜日</td><td></td><td></td></tr>
          <tr><td>月曜日</td><td class="n">00:00-24:00</td><td class="n">00:05-24:00</td></tr>
          <tr><td>火曜日</td><td class="n">00:00-24:00</td><td class="n">00:00-24:00</td></tr>
          <tr><td>水曜日</td><td class="n">00:00-24:00</td><td class="n">00:00-24:00</td></tr>
          <tr><td>木曜日</td><td class="n">00:00-24:00</td><td class="n">00:00-24:00</td></tr>
          <tr><td>金曜日</td><td class="n">00:00-23:58</td><td class="n">00:00-23:50</td></tr>
          <tr><td>土曜日</td><td></td><td></td></tr>
        </tbody>
      </table>
      <div class="track"><i class="thumb"></i></div>
    </div>
    <button class="ok">閉じる (C)</button>
    <div class="highlight"></div>
  </section>
</div>
</body>
</html>
```
FILE: styles.css
```css
* { box-sizing: border-box; }
body {
  margin: 0;
  background: #fff;
  color: #222;
  font: 12px/16px "Open Sans", "Noto Sans CJK JP", sans-serif;
  font-feature-settings: "palt";
}
button {
  margin: 0;
  padding: 0;
  border: 0;
  background: none;
  color: inherit;
  font: inherit;
  font-feature-settings: inherit;
  white-space: nowrap;
}
h1, h2, p, ul, ol { margin: 0; padding: 0; font: inherit; list-style: none; }
i { font-style: normal; }
table { border-collapse: collapse; table-layout: fixed; }
th, td { padding: 0; font-weight: 400; }
svg { display: block; flex: none; }
.defs { position: absolute; width: 0; height: 0; }
.ico { width: 20px; height: 20px; }

.frame {
  position: relative;
  display: flex;
  flex-direction: column;
  min-height: 100vh;
  padding: 0 12px 12px;
  border-radius: 12px;
  background: #c7c6d3;
}
.bezel { display: flex; justify-content: center; align-items: center; height: 52px; padding-top: 2px; }
.camera { width: 26px; height: 26px; border-radius: 50%; background: #fff; }
.app { display: flex; flex: 1; flex-direction: column; background: #f0f0f0; overflow: hidden; }

/* menu */
.menubar {
  display: flex;
  align-items: center;
  gap: 21px;
  height: 27px;
  padding: 3px 0 0 3px;
  border-bottom: 2px solid #c0c0c0;
}
.menubar .ico { width: 16px; height: 18px; margin-right: -11px; }
.winbtns { display: flex; gap: 3px; margin-left: auto; }
.winbtns button { width: 18px; height: 18px; padding: 1px; background: #fff; }

/* toolbars */
.toolbar { display: flex; height: 30px; }
.toolbar-sub { height: 29px; }
.tools {
  display: flex;
  align-items: center;
  height: 100%;
  border-right: 1px solid #a0a0a0;
  padding-right: 2px;
}
.toolbar-main .tools { border-bottom: 1px solid #b8b8b8; border-right-width: 2px; border-right-color: #c0c0c0; }
.grip {
  width: 4px;
  height: 22px;
  margin: 0 1px;
  background: repeating-linear-gradient(#a8a8a8 0 1px, #f0f0f0 1px 2px);
}
.sep { width: 1px; height: 24px; margin: 0 2px; background: #999; }
.tool {
  display: flex;
  align-items: center;
  justify-content: center;
  width: 27px;
  height: 24px;
  margin: 0 2px;
  border: 1px solid transparent;
}
.on { border-color: #999 #fff #fff #999; background: #f8f8f8; }
.drop { width: 37px; gap: 5px; }
.drop::after { content: ""; border: 4px solid transparent; border-top-color: #000; border-bottom: 0; }
.wide { width: 84px; gap: 2px; font-size: 13px; }
.periods, .letter { color: #555; font-size: 10px; }
.letter { font-size: 13px; font-weight: 600; }
.corner { display: flex; align-items: center; gap: 9px; margin-left: auto; padding-right: 5px; }
.notify { position: relative; }
.notify b {
  position: absolute;
  top: 0;
  right: 0;
  width: 18px;
  height: 18px;
  border-radius: 50%;
  background: #dd3b1c;
  color: #fff;
  font: 600 12px/18px "Open Sans", sans-serif;
}

/* work area */
.workspace { display: flex; flex: 1; border-top: 1px solid #888; min-height: 0; }
.side { display: flex; flex-direction: column; width: 349px; }
.panel { display: flex; flex-direction: column; padding: 0 5px 0 1px; }
.watch { height: 426px; border-bottom: 2px solid #c0c0c0; }
.navigator { flex: 1; }
.title { display: flex; height: 17px; align-items: center; border-bottom: 1px solid #b0b0b0; }
.title h2 {
  flex: 1;
  height: 16px;
  padding-left: 3px;
  background: linear-gradient(90deg, #c3d0df, #d5e3f1);
  line-height: 16px;
}
.title button { width: 12px; height: 16px; padding: 4px 0 4px 4px; }
.title svg, .rail svg { width: 8px; height: 8px; stroke: #000; stroke-width: 2; }
.scroller { display: flex; flex: 1; border-left: 1px solid #999; overflow: hidden; }
.quotes { width: 323px; background: #fff; }
.quotes th { height: 27px; border-bottom: 1px solid #c4c4c4; border-right: 1px solid #e4e4e4; text-align: right; padding-right: 6px; }
.quotes th:first-child { width: 139px; text-align: left; padding-left: 7px; }
.quotes th:nth-child(2) { width: 91px; }
.quotes td {
  height: 22px;
  border: 1px solid #c4c4c4;
  border-left: 0;
  padding: 0 3px 2px 0;
  font-size: 11px;
  line-height: 18px;
  text-align: right;
}
.quotes td:first-child { padding-left: 4px; font-size: 12px; text-align: left; }
.quotes svg { display: inline-block; width: 13px; height: 13px; margin-right: 5px; vertical-align: -4px; }
.quotes td:last-child { border-right: 0; }
.up td + td { color: #2222f0; }
.down td + td { color: #f52222; }
.track { position: relative; flex: 1; background: #f0f0f0; }
.thumb { position: absolute; width: 2px; background: #888; }
.watch .thumb { top: 134px; left: 8px; height: 227px; }
.tabs { display: flex; flex: none; height: 27px; padding-left: 2px; background: #f0f0f0; }
.tabs::after { content: ""; flex: 1; border-top: 2px solid #222; }
.tabs button {
  position: relative;
  display: flex;
  align-items: center;
  height: 22px;
  padding: 0 10px;
  border-top: 2px solid #222;
  color: #808080;
}
.tabs button:not(.active)::after { content: ""; position: absolute; right: 0; top: 3px; height: 15px; border-right: 1px solid #666; }
.tabs .active { border: solid #222; border-width: 0 2px 2px; background: #fff; color: #111; }
.tree { flex: 1; padding: 2px 0 0 7px; border-left: 1px solid #999; background: #fff; }
.tree p { display: flex; align-items: center; gap: 7px; height: 20px; }
.tree p .ico { width: 16px; height: 17px; }
.tree li { display: flex; align-items: center; height: 20px; gap: 7px; padding-left: 3px; }
.plus {
  width: 10px;
  height: 10px;
  border: 1px solid #888;
  background: linear-gradient(#446, #446) center / 6px 1px no-repeat, linear-gradient(#446, #446) center / 1px 6px no-repeat, #fff;
}
.tree li .ico { width: 19px; height: 19px; }

/* chart */
.chart {
  display: grid;
  flex: 1;
  grid-template-columns: 1fr 49px;
  grid-template-rows: 1fr 21px;
  min-width: 0;
  padding: 3px 0 0 3px;
  border-left: 1px solid #888;
  background: #000;
  color: #fff;
  font-size: 10px;
  line-height: 12px;
}
.plot { position: relative; border: 1px solid #ccc; min-height: 0; }
.plot > svg { position: absolute; inset: 0; width: 100%; height: 100%; }
.caption { position: absolute; top: 2px; left: 2px; display: flex; align-items: center; gap: 6px; }
.caption i { border: 4px solid transparent; border-top-color: #fff; border-bottom: 0; }
.prices { display: flex; flex-direction: column; justify-content: space-between; padding-top: 2px; }
.prices li { display: flex; align-items: center; gap: 3px; height: 12px; }
.prices li::before { content: ""; width: 2px; height: 1px; background: #ccc; }
.now { width: 45px; background: #fff; color: #000; }
.times { grid-column: 1 / 3; display: grid; grid-template-columns: repeat(22, 4.560%); }
.times li { position: relative; left: -1px; padding-top: 3px; white-space: nowrap; }
.times li::before { content: ""; position: absolute; top: 0; left: 1px; height: 3px; border-left: 1px solid #ccc; }

/* terminal */
.terminal { display: flex; height: 150px; padding-top: 6px; border-top: 1px solid #b0b0b0; border-bottom: 2px solid #c0c0c0; }
.rail { display: flex; flex-direction: column; align-items: center; width: 15px; padding-right: 1px; }
.rail button { padding: 1px 3px 6px; }
.rail h2 {
  flex: 1;
  width: 14px;
  min-height: 0;
  padding-top: 5px;
  background: linear-gradient(#c3d0df, #d5e3f1);
  writing-mode: vertical-rl;
  text-orientation: sideways;
  transform: rotate(180deg);
  font-size: 11px;
  line-height: 14px;
}
.orders { display: flex; flex: 1; flex-direction: column; border-top: 1px solid #aaa; border-left: 1px solid #999; margin-right: 2px; min-width: 0; background: #fff; }
.orders table { width: 100%; }
.orders th { height: 25px; padding: 0 6px 1px 0; border-right: 1px solid #e2e2e2; text-align: right; white-space: nowrap; }
.orders th:first-child { text-align: left; padding-left: 6px; }
.sort { margin-left: 14px; color: #888; }
.orders td { height: 22px; background: #c8c8c8; color: #111; font-weight: 600; text-align: right; padding-right: 4px; white-space: nowrap; }
.orders td:first-child { padding-left: 7px; text-align: left; }
.orders td svg { display: inline-block; margin-right: 8px; vertical-align: -1px; }
.c1 { width: 185px; }
.c2 { width: 258px; }
.c3 { width: 128px; }
.c4 { width: 100px; }
.c5 { width: 129px; }
.c6 { width: 143px; }
.orders .tabs { margin-top: auto; padding-left: 0; }
sub { align-self: flex-end; color: #f33; font-size: 9px; font-weight: 600; line-height: 10px; margin-left: 2px; }

.status { display: flex; height: 25px; align-items: center; }
.status span { height: 20px; margin-top: 4px; border-left: 1px solid #a0a0a0; line-height: 20px; }
.status .hint { flex: 1; border: 0; }
.s1 { width: 128px; padding-left: 6px; }
.s2 { width: 113px; }
.s3 { width: 76px; }
.status .net { display: flex; gap: 6px; width: 138px; padding: 1px 0 0 5px; }

/* symbol specification dialog */
.dialog {
  position: absolute;
  top: 196px;
  right: 0;
  left: 0;
  width: 800px;
  height: 723px;
  margin: 0 auto;
  border: 1px solid #888;
  border-radius: 12px;
  background: #f0f0f0;
  color: #111;
  font-size: 19px;
  line-height: 24px;
}
.dialog header { display: flex; align-items: center; height: 50px; padding: 0 30px 0 14px; gap: 5px; background: #f4f4f4; border-radius: 12px 12px 0 0; }
.dialog h1 { flex: 1; }
.help { width: 30px; margin-right: 45px; }
.list { display: flex; height: 591px; margin: 13px 14px 0; padding: 2px; border: 1px solid #7d8590; background: #fff; }
.list table { width: 736px; height: 555px; }
.k { width: 312px; }
.q { width: 209px; }
.list tr:nth-child(odd) { background: #eaeaea; }
.list td, .list th { border-bottom: 2px solid #c8c8c8; border-right: 1px solid #c0c0c0; padding: 2px 9px 0 7px; text-align: left; white-space: nowrap; }
.list td:first-child, .list th:first-child { padding-left: 12px; }
.list td[colspan] { text-align: right; border-right: 0; }
.list th { font-weight: 700; }
.list .n { font-size: 18px; }
.list .track { margin: 0 0 0 3px; }
.list .thumb { top: 224px; left: 11px; width: 2px; height: 332px; }
.ok {
  display: block;
  width: 144px;
  height: 34px;
  margin: 18px auto 0;
  border: 2px solid #1a7fd4;
  border-radius: 6px;
  background: #fff;
  font-size: 18px;
}
.highlight {
  position: absolute;
  top: 341px;
  left: -1px;
  width: 769px;
  height: 298px;
  border: solid #ffb9b9;
  border-width: 20px 20px 19px 19px;
}
```
